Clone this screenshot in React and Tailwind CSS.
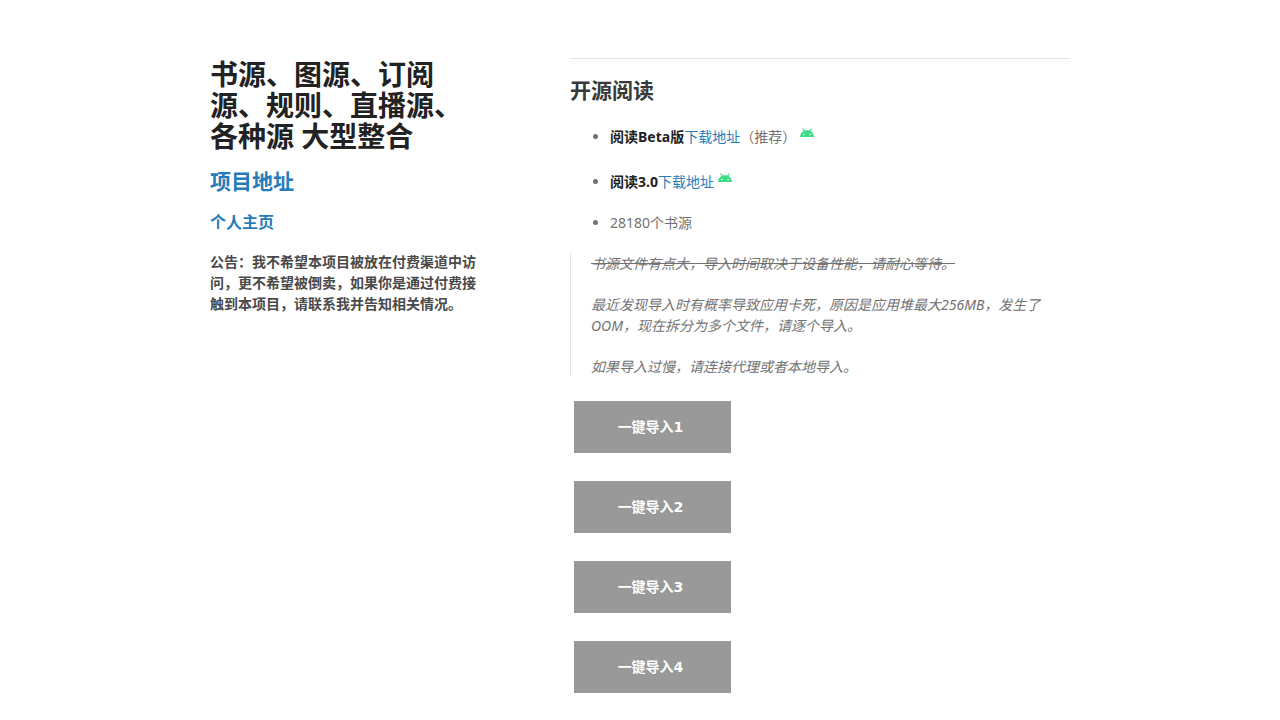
import React from "react";

const imports = ["一键导入1", "一键导入2", "一键导入3", "一键导入4"];

// Android robot head
const AndroidIcon = () => (
  <svg
    className="inline-block w-[14px] h-[10px] ml-1 align-[4px]"
    viewBox="0 0 28 20"
    fill="#3ddc84"
    aria-hidden="true"
  >
    <path
      fillRule="evenodd"
      d="M0 18C.4 12.800 3 8.600 7 6.200L4.200 1.600 6 .500 9 5.200C12 4 16 4 19 5.200L22 .500 23.800 1.600 21 6.200C25 8.600 27.600 12.800 28 18ZM7.600 11.300a1.500 1.500 0 1 0 0 3a1.500 1.500 0 0 0 0-3ZM20.400 11.300a1.500 1.500 0 1 0 0 3a1.500 1.500 0 0 0 0-3Z"
    />
  </svg>
);

const Link = ({ children }) => (
  <a href="#" className="text-[#267cb9] hover:text-[#006699]">
    {children}
  </a>
);

const Sidebar = () => (
  <header className="w-[270px] shrink-0 pt-px">
    <h1 className="text-[28px] leading-[31px] font-bold text-[#222222] mb-[18px]">
      书源、图源、订阅源、规则、直播源、各种源 大型整合
    </h1>
    <h2 className="text-[21px] leading-[23px] font-bold mb-5">
      <Link>项目地址</Link>
    </h2>
    <h3 className="text-base leading-[18px] font-bold mb-5">
      <Link>个人主页</Link>
    </h3>
    <p className="font-bold text-[#494949]">
      公告：我不希望本项目被放在付费渠道中访问，更不希望被倒卖，如果你是通过付费接触到本项目，请联系我并告知相关情况。
    </p>
  </header>
);

const App = () => {
  return (
    <div className="bg-white px-5 pt-[58px] pb-[26px] font-['Noto_Sans','Noto_Sans_CJK_SC',sans-serif] text-sm leading-[21px] text-[#727272]">
      <div className="max-w-[860px] mx-auto flex justify-between">
        <Sidebar />
        <section className="w-[500px]">
          <hr className="border-[#e5e5e5] mb-5" />
          <h2 className="text-[21px] leading-[23px] font-bold text-[#393939] mb-6">
            开源阅读
          </h2>
          <ul className="list-disc pl-10 mb-5 flex flex-col gap-5">
            <li className="pb-1">
              <strong className="text-[#222222]">阅读Beta版</strong>
              <Link>下载地址</Link>（推荐）
              <AndroidIcon />
            </li>
            <li>
              <strong className="text-[#222222]">阅读3.0</strong>
              <Link>下载地址</Link>
              <AndroidIcon />
            </li>
            <li>28180个书源</li>
          </ul>
          <blockquote className="border-l border-[#e5e5e5] pl-5 mb-6 italic flex flex-col gap-5">
            <p>
              <del>书源文件有点大，导入时间取决于设备性能，请耐心等待。</del>
            </p>
            <p>
              最近发现导入时有概率导致应用卡死，原因是应用堆最大256MB，发生了OOM，现在拆分为多个文件，请逐个导入。
            </p>
            <p>如果导入过慢，请连接代理或者本地导入。</p>
          </blockquote>
          <div className="flex flex-col items-start gap-7 pl-1">
            {imports.map((label) => (
              <button
                key={label}
                type="button"
                className="w-[157px] h-[52px] pr-1 bg-[#999999] text-white font-bold font-['DejaVu_Sans','Noto_Sans_CJK_SC',sans-serif] cursor-pointer hover:bg-[#777777]"
              >
                {label}
              </button>
            ))}
          </div>
        </section>
      </div>
    </div>
  );
};

export default App;
